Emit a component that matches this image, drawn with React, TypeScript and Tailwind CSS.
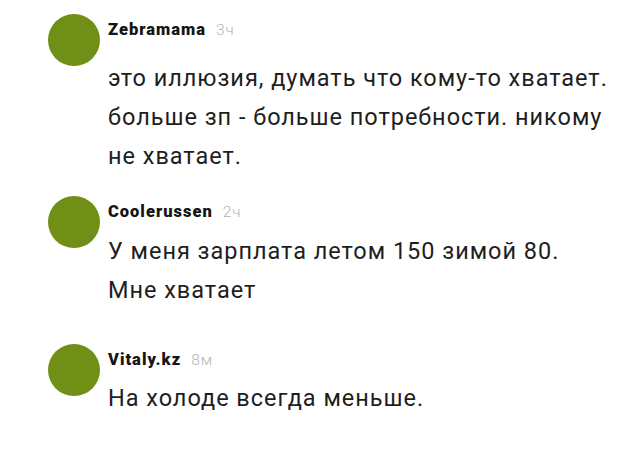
import React from 'react';

interface Comment {
  author: string;
  age: string;
  text: string[];
}

const comments: Comment[] = [
  {
    author: 'Zebramama',
    age: '3ч',
    text: ['это иллюзия, думать что кому-то хватает.', 'больше зп - больше потребности. никому', 'не хватает.'],
  },
  {
    author: 'Coolerussen',
    age: '2ч',
    text: ['У меня зарплата летом 150 зимой 80.', 'Мне хватает'],
  },
  {
    author: 'Vitaly.kz',
    age: '8м',
    text: ['На холоде всегда меньше.'],
  },
];

// gap between author line and the comment body differs a little per row
const bodyGap = ['mt-[19px]', 'mt-[10px]', 'mt-[9px]'];

const CommentRow: React.FC<{ c: Comment; idx: number; className?: string }> = ({ c, idx, className }) => (
  <div className={`flex ${className ?? ''}`}>
    <div className="w-[52px] h-[52px] rounded-full bg-[#6f8f17] shrink-0" />
    <div className="ml-[8px] pt-[6px]">
      <div className="flex items-baseline leading-[20px]">
        <span className="text-[16.5px] font-black text-[#151515] tracking-[1px]">{c.author}</span>
        <span className="ml-[10px] text-[15.5px] font-light text-[#b3b3b3] tracking-[1px]">{c.age}</span>
      </div>
      <div className={`${bodyGap[idx]} text-[23.5px] leading-[39px] tracking-[0.97px] text-[#1e1e1e]`}>
        {c.text.map((line) => (
          <div key={line}>{line}</div>
        ))}
      </div>
    </div>
  </div>
);

export default function App() {
  return (
    <div className="w-[640px] h-[469px] bg-white pl-[48px] pt-[14px]" style={{ fontFamily: 'Roboto, sans-serif' }}>
      <CommentRow c={comments[0]} idx={0} />
      <CommentRow c={comments[1]} idx={1} className="mt-[20px]" />
      <CommentRow c={comments[2]} idx={2} className="mt-[34px]" />
    </div>
  );
}
